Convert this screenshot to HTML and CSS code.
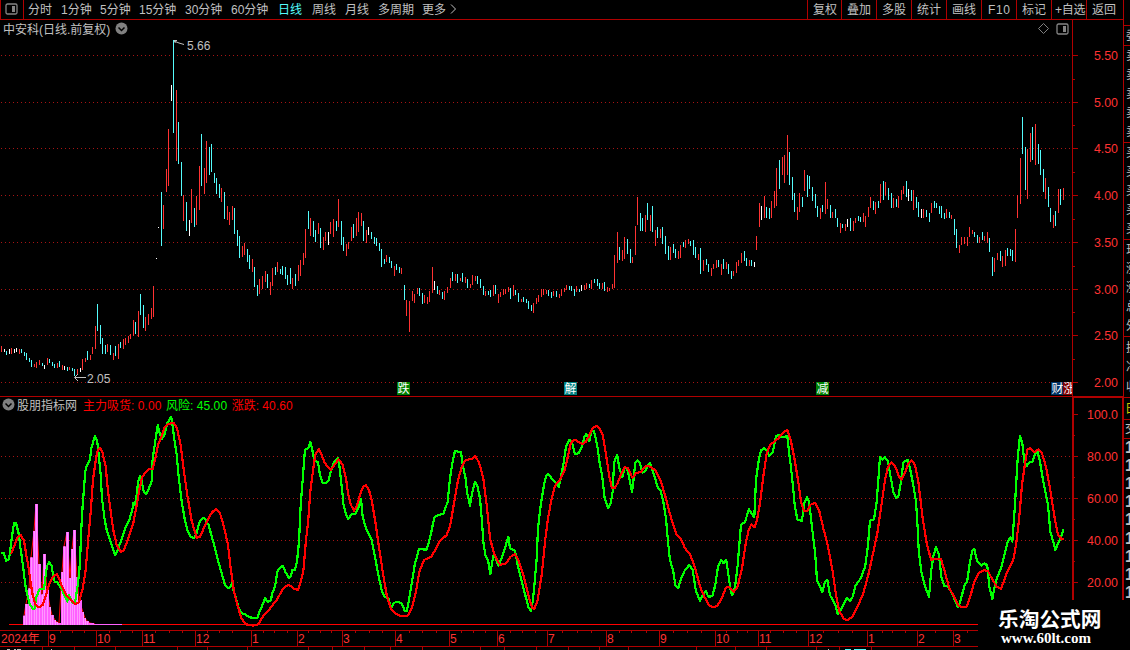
FILE: index.html
```
<!DOCTYPE html>
<html lang="zh-CN">
<head>
<meta charset="utf-8">
<title>中安科 日线</title>
<link rel="stylesheet" href="styles.css">
</head>
<body>
<div class="terminal">
  <header class="toolbar">
    <div class="panel-toggle">
      <svg width="13" height="12" viewBox="0 0 13 12"><rect x="1" y="1" width="11" height="10" rx="1.5" fill="none" stroke="#858585" stroke-width="1.3"/><rect x="7" y="3" width="3" height="6" fill="#858585"/></svg>
    </div>
    <nav class="periods">
      <span>分时</span><span>1分钟</span><span>5分钟</span><span>15分钟</span><span>30分钟</span><span>60分钟</span><span class="active">日线</span><span>周线</span><span>月线</span><span>多周期</span><span>更多</span>
      <svg width="7" height="10" viewBox="0 0 7 10"><path d="M1 0.5L5.5 5L1 9.5" fill="none" stroke="#c0c0c0"/></svg>
    </nav>
    <nav class="actions">
      <span>复权</span><span>叠加</span><span>多股</span><span>统计</span><span>画线</span><span class="wide">F10</span><span>标记</span><span class="tight">+自选</span><span class="last">返回</span>
    </nav>
  </header>

  <main class="body">
    <div class="charts">
      <section class="price">
        <div class="title">
          <span>中安科(日线.前复权)</span>
          <svg width="13" height="13" viewBox="0 0 13 13"><circle cx="6.5" cy="6.5" r="6" fill="#808080"/><path d="M3.5 5.5L6.5 8.5L9.5 5.5" fill="none" stroke="#000" stroke-width="1.5"/></svg>
          <svg class="push" width="11" height="11" viewBox="0 0 11 11"><path d="M5.5 .5L10.5 5.5L5.5 10.5L.5 5.5Z" fill="none" stroke="#808080"/></svg>
          <svg width="13" height="12" viewBox="0 0 13 12"><rect x="1" y="1" width="11" height="10" rx="1.5" fill="none" stroke="#858585" stroke-width="1.3"/><rect x="7" y="3" width="3" height="6" fill="#858585"/></svg>
        </div>
        <svg class="plot" id="price" width="1072" height="358" viewBox="0 38 1072 358"></svg>
      </section>
      <section class="indicator">
        <div class="title">
          <svg width="13" height="13" viewBox="0 0 13 13"><circle cx="6.5" cy="6.5" r="6" fill="#808080"/><path d="M3.5 5.5L6.5 8.5L9.5 5.5" fill="none" stroke="#000" stroke-width="1.5"/></svg>
          <span class="name">股朋指标网</span>
          <span class="red">主力吸货: <b>0.00</b></span>
          <span class="green">风险: <b>45.00</b></span>
          <span class="red">涨跌: <b>40.60</b></span>
        </div>
        <svg class="plot" id="indicator" width="1072" height="216" viewBox="0 414 1072 216"></svg>
      </section>
    </div>
    <div class="scales">
      <svg id="priceScale" width="51" height="376" viewBox="1072 20 51 376"></svg>
      <div class="scale-low"><svg id="indicatorScale" width="47" height="203" viewBox="1074 398 47 203"></svg></div>
    </div>
    <aside class="quotes">
      <div class="q gap"></div>
      <div class="q one"><span>委</span></div>
      <div class="q five"><span>卖</span><span>卖</span><span>卖</span><span>卖</span><span>卖</span></div>
      <div class="q five"><span>买</span><span>买</span><span>买</span><span>买</span><span>买</span></div>
      <div class="q five"><span>现</span><span>涨</span><span>涨</span><span>总</span><span>外</span></div>
      <div class="q three"><span>换</span><span>净</span><span>收</span></div>
      <div class="q head"><span>日</span></div>
      <div class="q time"><span>交</span></div>
      <div class="q ticks"><b>1</b><b>1</b><b>1</b><b>1</b><b>1</b><b>1</b><b>1</b><b>1</b><b>1</b></div>
    </aside>
  </main>
  <footer class="timeline">
    <svg id="dates" width="978" height="20" viewBox="0 630 978 20"></svg>
  </footer>
  <div class="watermark"><strong>乐淘公式网</strong><span>www.60lt.com</span></div>
</div>
<script src="chart.js"></script>
</body>
</html>
```
FILE: styles.css
```
* { box-sizing: border-box; }
body {
  margin: 0;
  background: #000;
  color: #c0c0c0;
  font-family: "Liberation Sans", "Noto Sans CJK SC", sans-serif;
  font-size: 12px;
  overflow: hidden;
}
svg { display: block; flex: none; }
.terminal { position: relative; width: 1130px; height: 650px; overflow: hidden; display: flex; flex-direction: column; }

.toolbar { display: flex; height: 20px; width: 1124px; border-bottom: 1px solid #b00000; border-right: 1px solid #b00000; line-height: 20px; white-space: nowrap; }
.panel-toggle { width: 24px; border-left: 1px solid #b00000; border-right: 1px solid #b00000; padding: 3px 0 0 4px; }
.periods { display: grid; grid-template-columns: 33px 39px 39px 46px 46px 47px 34px 33px 33px 44px 28px 10px; padding-left: 4px; align-items: center; }
.periods span, .actions span { height: 19px; }
.periods svg { margin-bottom: 2px; }
.periods .active { color: #54fcfc; }
.actions { display: grid; grid-template-columns: 34px repeat(7, 35px) 37px; margin-left: auto; }
.actions span { border-left: 1px solid #b00000; padding-left: 5px; }
.actions .wide { padding-left: 6px; letter-spacing: .6px; }
.actions .tight { padding-left: 3px; letter-spacing: -.3px; }

.body { display: flex; height: 610px; }
.charts { width: 1072px; }
.title { display: flex; align-items: center; height: 18px; padding: 0 0 1px 3px; white-space: nowrap; }
.price { height: 377px; border-bottom: 1px solid #b00000; }
.price .title { gap: 5px; padding-right: 3px; }
.price .title .push { margin-left: auto; margin-right: 2px; }
.indicator .title { height: 17px; padding-left: 2px; padding-bottom: 2px; }
.indicator .name { margin: 0 6px 0 2px; }
.title b { font-weight: 400; letter-spacing: .1px; }
.red { color: #ff0000; margin-right: 4.5px; }
.green { color: #00ff00; margin-right: 4.5px; }

.scales { width: 51px; flex: none; position: relative; }
.scale-low { height: 204px; border: 2px solid #b00000; border-bottom: 0; margin-right: -1px; width: 52px; }
.quotes { width: 7px; overflow: hidden; }
.q { border-left: 1px solid #b00000; border-bottom: 1px solid #b00000; padding-left: 2px; display: flex; flex-direction: column; justify-content: space-evenly; overflow: hidden; line-height: 18px; }
.gap { height: 6px; }
.one { height: 20px; }
.five { height: 97px; }
.three { height: 61px; }
.head { height: 22px; color: #d0c800; border-left: 0; padding-left: 2px; }
.time { height: 19px; border-left: 0; }
.ticks { border: 0; height: 163px; }
.ticks b { height: 18px; line-height: 18px; font-size: 16px; }

.timeline { height: 20px; }
.watermark { position: absolute; left: 978px; top: 600px; width: 152px; height: 50px; background: #000; color: #fff; display: flex; flex-direction: column; padding: 5px 0 0 20px; line-height: 1; }
.watermark strong { font: bold 20.7px/26px "Noto Sans CJK SC", sans-serif; }
.watermark span { font: bold 15px/15px "Liberation Serif", serif; padding-left: 3px; }

.plot-text { font: 12px "Liberation Sans", "Noto Sans CJK SC", sans-serif; }
.line { fill: none; stroke-width: 2.2; shape-rendering: crispEdges; stroke-linejoin: round; }
```
FILE: chart.js
```
const RED = '#b00000', BRIGHT = '#ff3232';
const COLORS = { r: '#ff3232', c: '#54fcfc', w: '#ffffff' };
const rect = (x, y, w, h, fill) => `<rect x="${x}" y="${y}" width="${w}" height="${h}" fill="${fill}"/>`;
const text = (x, y, s, fill, anchor = 'start', size = 12) =>
  `<text class="plot-text" x="${x}" y="${y}" fill="${fill}" text-anchor="${anchor}" style="font-size:${size}px">${s}</text>`;
const dots = y => `<line x1="1" x2="1072" y1="${y + .5}" y2="${y + .5}" stroke="#a81414" stroke-dasharray="1 3"/>`;

/* Daily ranges: x, top, bottom, kind. Units are thirds of a pixel from each segment's origin. */
const bars = [
  [0, 270, `4 228 246 r;13 237 246 w;19 243 255 c;28 237 252 w;34 234 252 r;43 237 249 w;49 234 246 w;58 237 252 r;64 237 249 c;73 246 258 c;79 249 270 c;88 264 276 c;94 270 291 c;103 282 291 r;109 276 294 r;118 270 285 r;127 279 288 c;133 285 297 w;142 264 285 r;148 267 279 c;157 276 288 c;163 282 294 c;172 279 294 r;178 273 291 c;187 285 300 r;193 288 300 w;202 291 303 c;208 291 300 r;217 294 303 c;223 297 318 c;232 297 312 r;241 294 306 w;247 267 300 r;256 264 276 r;262 243 270 c;271 255 270 r;277 231 252 r;286 168 237 r;292 102 183 c;301 165 222 c;307 204 252 c;316 225 252 c;322 222 246 r;331 225 255 c;340 249 270 r;346 228 258 c;355 222 267 r;361 216 234 c;370 207 237 r;376 204 225 r;385 198 219 r;391 192 207 r;400 150 198 r;406 156 192 c;415 123 201 r;421 72 135 c;430 105 174 c;436 141 183 r;445 132 165 r;454 114 147 r;460 48 141 r`],
  [150, 30, `19 684 687 w;25 591 594 w;34 486 648 c;40 525 597 r;49 417 486 r;55 297 468 r;64 165 213 w;70 30 309 c;79 180 393 r;85 276 402 c;94 396 498 c;100 495 573 r;109 516 603 c;118 570 618 w;124 477 579 r;133 534 591 c;139 498 585 r;148 408 540 r;154 312 468 c;163 414 492 r;169 333 459 r;178 351 435 c;184 342 426 c;193 429 459 c;199 444 492 c;208 462 504 c;214 474 516 r;223 486 567 c;232 528 570 r;238 546 585 r;247 528 570 r;253 534 612 c;262 600 648 c;268 618 684 c;277 648 681 r;283 639 675 r;292 657 696 c;298 675 717 c;307 687 726 r;313 711 771 c;322 765 798 c;328 747 792 r;337 738 777 r;346 723 756 r;352 732 774 c;361 756 795 r;367 714 768 r;376 711 735 c;382 696 726 r;391 717 732 c;397 708 735 c;406 711 747 c;412 735 765 c;421 714 762 c;427 744 777 r;436 732 768 c;445 705 753 r;451 690 738 r;460 669 705 r;466 597 684 r;475 543 597 c;481 564 618 r;490 573 621 c;496 600 636 c;505 579 612 r;511 594 654 c;520 621 660 r;526 606 633 r;535 606 645 w;541 576 612 r;550 567 621 r;559 573 603 c;565 507 591 r;574 573 645 c;580 621 663 c;589 642 678 r;595 636 657 r;604 591 633 r;610 582 624 c;619 564 618 r;625 546 606 r;634 549 588 r;640 573 633 c;649 600 639 r;655 591 615 w;664 606 627 c;673 621 642 c;679 624 648 c;688 639 663 c;694 657 711 c;703 687 702 c;709 675 696 r;718 681 699 c;724 693 714 c;733 708 738 r;739 702 720 c;748 711 729 c`],
  [390, 180, `34 264 282 r;43 315 360 c;49 360 408 r;58 363 456 r;67 333 363 r;73 342 369 r;82 324 342 r;88 324 348 c;97 339 372 c;103 345 369 r;112 351 372 r;118 333 366 r;127 261 339 r;133 303 330 w;142 318 342 c;148 330 345 r;157 336 357 c;163 333 360 r;172 321 339 r;181 294 324 r;187 276 303 c;196 282 303 r;202 282 309 c;211 294 303 r;217 279 306 c;226 291 309 r;232 297 324 c;241 312 324 r;247 285 315 r;256 288 303 r;262 288 312 c;271 297 324 c;280 318 345 c;286 333 348 r;295 333 345 c;301 330 351 c;310 315 348 r;316 315 342 c;325 342 369 r;331 336 351 r;340 327 345 r;346 327 342 r;355 321 336 r;361 324 357 c;370 315 348 r;376 330 345 c;385 339 366 c;394 357 366 r;400 351 366 c;409 357 369 c;415 363 387 c;424 375 393 c;430 369 399 r;439 354 372 r;445 345 366 r;454 327 351 r;460 327 345 r;469 330 342 r;475 330 348 c;484 336 354 c;490 333 348 r;499 333 351 c;508 342 354 r;514 327 348 r;523 324 336 r;529 315 330 r;538 318 330 c;544 318 333 c;553 327 348 c;559 318 336 r;568 327 336 c;574 315 333 w;583 315 330 r;589 309 327 r;598 312 324 c;604 300 327 r;613 297 309 c;622 297 318 c;628 309 327 c;637 309 327 r;643 306 333 c;652 321 336 r;658 324 333 r;667 312 327 r;673 225 324 r;682 156 249 r;688 201 240 c;697 210 243 r;703 171 237 r;712 177 222 c;721 207 249 c;727 231 249 r;736 138 225 r;742 51 135 r;751 99 153 c;757 114 153 c;766 105 156 r;772 69 120 c;781 105 153 r;787 78 156 c;796 150 198 r;802 141 174 c;811 147 174 r;817 141 192 c;826 168 222 c;835 198 240 c`],
  [650, 120, `61 381 420 r;70 372 399 c;76 387 414 c;85 393 417 r;91 375 414 r;100 366 381 c;106 360 384 r;115 357 372 r;121 363 378 c;130 360 405 c;136 381 414 c;145 402 420 r;151 384 462 c;160 420 453 r;169 417 435 c;175 432 456 c;184 444 468 r;190 432 447 r;199 420 444 r;205 420 441 c;214 432 465 r;220 417 447 c;229 426 447 r;235 432 462 c;244 453 477 c;250 453 468 r;259 426 459 r;265 420 438 r;274 399 429 r;283 393 423 c;289 414 438 c;298 420 438 r;304 420 438 c;313 426 441 w;319 348 390 r;328 249 321 r;334 258 300 w;343 228 294 r;349 261 294 c;358 264 297 c;364 243 294 r;373 213 264 r;379 144 258 r;388 120 207 c;397 111 165 r;403 105 189 r;412 45 165 r;418 96 195 c;427 171 240 c;433 219 276 c;442 261 300 r;448 219 276 r;457 231 261 c;463 150 213 r;472 165 231 c;478 168 207 c;487 201 243 c;496 222 264 c;502 258 291 c;511 264 297 r;517 255 276 c;526 186 282 r;532 237 267 r;541 255 294 c;547 276 294 r;556 267 294 c;562 294 321 c;571 309 339 r;577 312 324 c;586 312 333 r;592 297 321 w;601 294 333 c;610 303 333 r;616 294 309 r;625 288 303 c;631 291 306 c;640 279 306 r;646 288 321 r;655 261 291 r;661 231 264 r;670 243 270 c;676 246 282 r;685 243 264 c;691 192 249 r;700 183 240 c;706 186 228 r;715 204 240 c;724 219 264 c;730 234 264 r;739 237 261 c;745 228 264 r;754 210 240 r;760 198 222 r;769 183 231 c;775 207 243 w`],
  [880, 100, `94 270 303 c;100 270 330 r;109 291 324 c;115 306 351 c;124 327 354 w;130 327 354 r;139 330 351 c;148 339 366 c;154 309 339 r;163 303 324 c;169 309 324 c;178 318 342 c;184 318 354 c;193 339 357 c;199 327 354 r;208 336 354 c;214 345 357 r;223 357 405 c;229 387 444 c;238 435 459 r;244 411 435 r;253 411 432 r;262 411 438 r;268 381 411 r;277 390 402 r;283 396 411 c;292 405 429 c;298 411 429 r;307 396 420 c;313 408 423 r;322 396 429 r;328 414 456 c;337 471 528 c;343 474 516 r;352 459 480 r;361 453 483 c;367 468 501 r;376 450 498 r;382 444 468 c;391 447 468 c;397 450 483 c;406 387 486 r;412 285 354 r;421 174 312 r;427 51 162 c;436 141 270 c;442 147 297 r;451 99 186 r;457 81 180 c;466 72 195 r;475 132 192 c;481 150 225 c;490 207 276 c;496 234 297 r;505 261 321 c;511 324 366 c;520 345 384 r;526 333 378 c;535 267 339 r;541 267 315 c;550 264 300 r`]
];

let price = [55, 102, 148, 195, 242, 289, 335, 382].map(dots).join('');
for (const [ox, oy, data] of bars) {
  for (const row of data.split(';')) {
    const [x, a, b, k] = row.trim().split(' ');
    price += rect(ox + Math.floor(x / 3), oy + Math.round(a / 3), 1, Math.round((b - a) / 3), COLORS[k]);
  }
}
price += '<path d="M174 40.5H177M175.5 43L174 41L179 43L184 44.5" fill="none" stroke="#c0c0c0"/>' + text(187, 50, '5.66', '#c0c0c0');
price += '<path d="M75 377.5H86M78 374L74.500 377.500L78 381" fill="none" stroke="#c0c0c0"/>' + text(87, 383, '2.05', '#c0c0c0');
[[397, '跌', '#008000', 13], [564, '解', '#008080', 13], [816, '减', '#008000', 13], [1051, '财', '#003366', 12], [1063, '涨', '#800000', 9]].forEach(([x, s, c, w]) => {
  price += rect(x, 382, w, 13, c) + text(x + .5, 393, s, '#fff');
});
document.getElementById('price').innerHTML = price;

/* Indicator curves, same units as the daily ranges. */
const green = [
  [0, `4,475 12,475 18,497 27,493 34,440 42,384 48,384 57,420 60,450 66,490 71,530 76,570 82,600 90,630 100,642 104,640 108,610 118,583 132,583 137,540 141,513 147,502 155,512 160,545 164,560 172,562 185,582 195,605 202,620 207,600 218,625 225,624 228,605 233,570 238,530 241,480 244,400 248,330 252,280 256,230 260,212 270,195 274,160 285,122 292,140 297,190 302,240 306,310 314,375 320,405 330,435 345,480 352,470 357,453 366,430 376,398 388,375 397,345 400,325 405,330 410,300 414,260 420,243 424,250 430,285 437,298 444,288 455,258 458,190 464,150 473,90 478,110 485,132 493,120 502,85 512,66 516,75 521,120 530,180 536,245 545,320 554,372 562,405 570,423 582,430 590,415 597,385 605,372 613,368 626,390 634,420 645,460 655,500 665,535 675,570 684,580 692,575 697,560 701,590 708,610 715,635 725,655 735,658 748,667 772,670 778,650 785,635 795,610 803,620 812,617 817,595 825,575 832,530 840,518 848,512 856,530 866,549 872,545 877,525 885,525 891,500 897,440 902,330 907,270 912,200`],
  [290, `45,165 55,160 61,140 67,165 73,195 84,202 90,240 98,263 110,263 116,255 122,230 133,200 144,188 149,220 157,290 160,325 168,360 175,373 185,357 195,358 205,340 213,312 218,365 228,400 245,435 256,490 266,545 275,585 283,605 295,610 304,640 310,625 320,620 335,625 344,648 350,648 356,620 366,560 374,510 387,462 410,464 420,430 433,367 445,360 460,357 473,320 480,250 487,205 495,167 505,170 513,172 518,210 526,245 532,295 540,332 546,295 555,260 562,272 570,310 576,380 580,440 586,480 595,500 601,538 606,505 611,480 617,490 625,512 635,490 645,460 655,425 660,460 675,467 684,515 695,560 707,605 715,635 723,648 728,620 734,560 740,490 744,400 752,330 762,270 768,245 774,237 785,250 795,260 806,276 812,250 820,210 828,155 837,135`],
  [550, `61,134 68,150 75,178 86,175 96,155 103,125 109,117 118,138 124,110 131,107 137,130 143,160 149,205 157,245 164,310 175,340 182,325 188,290 192,205 197,190 202,180 208,220 217,247 224,218 232,222 238,250 246,291 250,260 256,202 263,196 270,205 277,233 286,229 293,212 300,204 306,223 316,250 322,275 332,287 340,320 348,370 354,440 360,495 370,530 376,570 385,579 393,550 405,525 418,510 428,525 437,585 450,618 458,600 467,588 475,605 487,604 496,570 504,515 513,495 521,505 529,495 534,530 541,580 546,600 552,592 557,560 563,510 568,450 573,390 585,380 597,343 605,355 613,367 618,255 627,190 634,165 643,160 650,168 658,183 668,172 678,123 687,119 695,127 712,123 717,170 722,210 728,265 734,330 742,373 756,378 762,325 771,307 777,320 783,370 790,430 796,480 801,555 810,575 817,592 824,562 832,554 840,600 856,630 863,657`],
  [820, `56,655 64,642 80,608 90,618 98,605 106,573 122,550 136,513 144,450 150,377 162,373 170,320 176,240 180,186 188,194 195,187 204,200 210,235 220,290 228,308 235,305 243,260 250,202 263,195 270,220 280,270 288,320 293,400 296,465 304,530 314,570 327,606 334,525 340,485 348,456 357,480 364,545 373,573 383,572 400,603 413,636 421,620 433,573 442,557 450,500 457,466 463,462 471,497 484,512 494,505 502,512 508,575 517,612 523,580 530,550 543,520 556,470 563,440 571,427 577,440 583,360 588,275 593,190 600,122 607,145 613,200 620,213 630,200 638,200 645,175 653,170 660,200 670,260 684,330 691,410 700,440 706,466 714,445 724,425 730,403`]
];
const red = [
  [0, `33,478 42,455 52,428 62,420 72,437 79,480 86,520 92,565 98,600 106,628 116,637 128,630 138,600 147,570 158,547 170,537 178,552 188,580 200,603 215,618 228,628 238,620 248,580 257,525 265,430 272,350 279,255 286,205 292,170 300,158 307,170 317,215 323,280 332,350 340,405 350,450 362,471 372,465 385,430 400,385 410,330 418,285 426,248 436,232 446,222 458,222 466,190 474,150 486,120 494,97 505,87 520,83 530,97 542,150 552,230 562,300 575,378 590,428 600,425 620,380 635,353 647,342 660,355 672,395 684,450 692,520 702,590 715,640 725,672 738,688 760,692 775,688 790,662 808,643 830,615 850,580 863,570`],
  [290, `2,573 12,582 24,584 32,560 40,530 48,435 55,375 61,290 70,220 76,180 86,162 95,180 105,205 122,225 135,208 146,193 158,210 168,250 175,300 183,330 192,347 200,335 213,290 220,275 228,271 237,285 246,320 256,380 266,450 278,530 290,600 302,640 315,655 332,663 353,662 365,640 378,590 388,530 402,495 425,484 450,438 470,420 480,395 492,325 503,260 514,220 525,197 548,190 556,183 568,205 580,250 590,330 600,430 612,475 630,510 648,505 662,485 675,477 686,498 700,540 715,600 727,640 733,641 742,620 755,540 765,440 774,370 785,310 795,272 810,255 824,225 837,170`],
  [550, `61,150 66,138 76,134 86,142 98,148 108,140 116,125 126,102 138,92 148,100 158,120 165,160 172,205 178,245 186,280 194,280 204,262 213,238 224,216 234,220 247,248 258,235 273,230 288,212 303,216 318,228 332,258 345,300 358,350 370,390 380,420 393,432 405,460 420,478 436,520 450,575 463,605 477,630 490,637 502,633 515,610 528,578 537,575 552,590 563,575 576,520 588,440 596,405 604,388 614,397 622,370 630,325 640,245 650,175 660,150 672,140 685,130 700,112 712,104 722,135 734,195 744,255 754,325 762,348 772,348 780,330 795,323 808,348 820,400 833,450 848,530 858,600 868,650`],
  [820, `64,658 72,672 83,675 98,664 115,630 130,595 145,540 158,480 172,415 182,345 195,255 204,215 214,202 226,215 237,245 244,254 254,235 264,208 275,196 285,210 295,260 308,370 320,445 333,494 348,491 363,492 373,525 388,580 403,605 415,632 427,637 440,635 452,600 463,560 478,532 492,526 504,528 515,550 530,575 543,582 560,535 580,495 588,450 597,375 606,270 615,205 622,165 630,158 643,172 655,163 666,175 678,215 690,280 704,370 714,420 725,433 731,433`]
];
const curve = (segments, color) => {
  const pts = segments.flatMap(([ox, data]) => data.split(' ').map(p => {
    const [x, y] = p.split(',');
    return `${(ox + x / 3).toFixed(1)},${(395 + y / 3).toFixed(1)}`;
  }));
  return `<polyline class="line" points="${pts.join(' ')}" stroke="${color}"/>`;
};

/* Accumulation columns: left, right, top. */
const columns = [[69,75,662],[75,84,627],[84,90,580],[90,99,487],[99,105,408],[105,114,327],[114,123,507],[123,129,598],[129,138,477],[138,147,583],[147,153,636],[153,162,660],[162,168,675],[168,174,681],[174,183,684],[183,189,531],[189,198,454],[198,207,411],[207,213,549],[213,219,462],[219,228,405],[228,234,546],[234,246,615],[246,252,651],[252,258,669],[258,267,678],[267,282,684],[282,366,687]];
let ind = [456, 498, 540, 582].map(dots).join('');
ind += rect(9, 624, 1063, 1, '#ff0000');
ind += `<polyline points="${columns.map(([a, b, t]) => `${(a / 3 + 1).toFixed(1)},${395 + t / 3}`).join(' ')}" fill="none" stroke="#ff0000"/>`;
for (const [a, b, t] of columns) {
  ind += rect(a / 3, 395 + t / 3, (b - a) / 3, (690 - t) / 3, '#ff60ff');
  if (t < 684) ind += rect(a / 3 + 1, 395 + t / 3, 1, (690 - t) / 3, '#ff98ff');
}
ind += curve(green, '#00ff00') + curve(red, '#ff0000');
document.getElementById('indicator').innerHTML = ind;

let scale = rect(1072, 20, 1, 376, RED);
[55, 102, 148, 195, 242, 289, 335, 382].forEach((y, i) => {
  scale += rect(1073, y, 5, 1, RED) + text(1118, y + 5, (5.5 - i / 2).toFixed(2), BRIGHT, 'end', 12.4);
});
[79, 125, 172, 219, 266, 312, 359].forEach(y => { scale += rect(1073, y, 2, 1, RED); });
document.getElementById('priceScale').innerHTML = scale;

let low = '';
[[414, '100.0'], [456, '80.00'], [498, '60.00'], [540, '40.00'], [582, '20.00']].forEach(([y, s]) => {
  low += rect(1074, y, 4, 1, RED) + text(1118, y + 5, s, BRIGHT, 'end', 12.4);
  if (y < 582) low += rect(1074, y + 21, 1, 1, RED);
});
document.getElementById('indicatorScale').innerHTML = low;

let dates = rect(0, 630, 978, 1, RED) + rect(0, 646, 978, 1, RED) + text(1, 643, '2024年', BRIGHT);
[[48, 9], [96, 10], [142, 11], [195, 12], [251, 1], [297, 2], [342, 3], [395, 4], [449, 5], [497, 6], [547, 7], [606, 8], [659, 9], [715, 10], [758, 11], [808, 12], [867, 1], [917, 2], [953, 3]].forEach(([x, m]) => {
  dates += rect(x, 630, 1, 16, RED) + text(x + 1, 643, m, BRIGHT);
});
[60, 72, 84, 109, 120, 132, 155, 169, 182, 207, 219, 232, 263, 274, 287, 308, 320, 331, 355, 369, 382, 409, 422, 436, 461, 473, 485, 510, 522, 535, 562, 577, 591, 619, 631, 646, 673, 687, 701, 726, 737, 747, 770, 783, 796, 823, 838, 852, 882, 892, 905, 935, 967].forEach(x => { dates += rect(x, 631, 1, 2, RED); });
[42, 74, 115, 177, 207, 247, 308, 332, 364, 390, 422, 480, 504, 536, 568, 599, 628, 696, 735, 766, 816, 839, 871].forEach(x => { dates += rect(x, 647, 1, 3, RED); });
[[7, 3], [14, 2], [17, 4], [51, 1], [828, 1]].forEach(([x, w]) => { dates += rect(x, 649, w, 1, '#c0c0c0'); });
dates += rect(845, 649, 6, 1, '#54fcfc') + rect(854, 649, 12, 1, '#54fcfc');
document.getElementById('dates').innerHTML = dates;
```
